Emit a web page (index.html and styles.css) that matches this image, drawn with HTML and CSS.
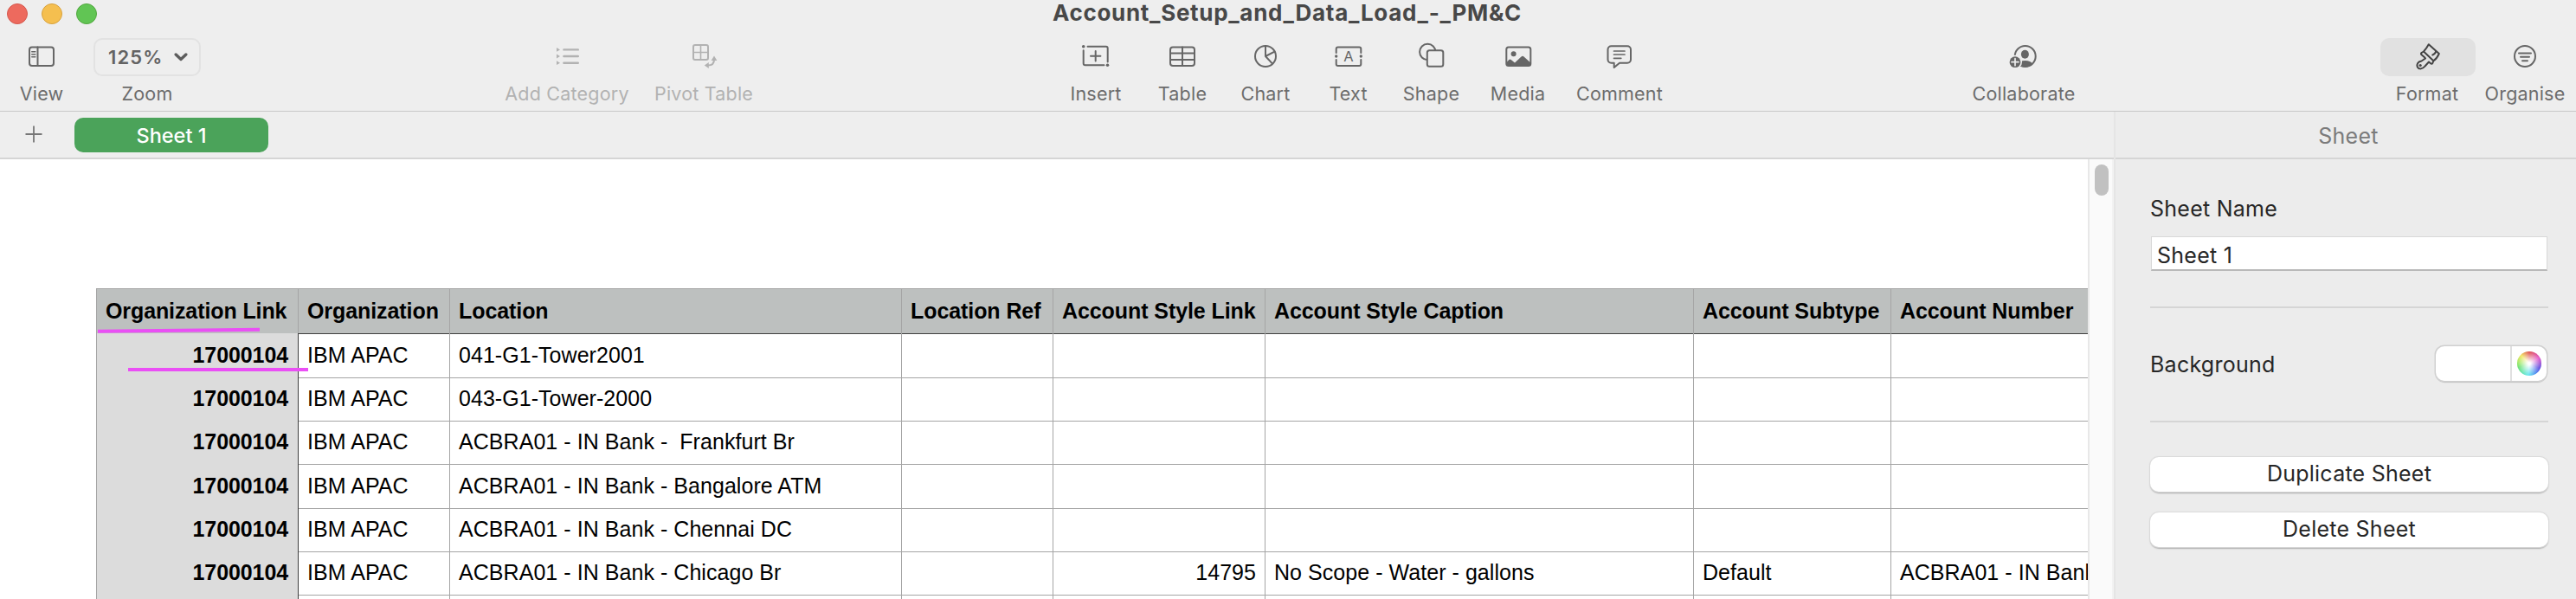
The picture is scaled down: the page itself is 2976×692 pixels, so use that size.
FILE: index.html
```html
<!DOCTYPE html>
<html lang="en">
<head>
<meta charset="utf-8">
<title>Account_Setup_and_Data_Load_-_PM&amp;C</title>
<link rel="stylesheet" href="styles.css">
</head>
<body>
<div class="window">
  <header class="titlebar">
    <div class="lights"><i class="close"></i><i class="min"></i><i class="max"></i></div>
    <h1 class="title">Account_Setup_and_Data_Load_-_PM&amp;C</h1>
    <nav class="toolbar">
      <div class="tool t-view">
        <svg class="icon" viewBox="-22 -22 44 44"><rect x="-14" y="-11.6" width="28" height="21.6" rx="3"/><path d="M-4.5-11.6V10"/><path class="thin" d="M-11.2-6.3h4M-11.2-3.3h4M-11.2-.3h4"/></svg>
        <span>View</span></div>
      <div class="tool t-zoom">
        <div class="zoom-menu"><b>125%</b><svg viewBox="0 0 16 10"><path d="M2.2 2 8 7.4 13.8 2"/></svg></div>
        <span>Zoom</span></div>
      <div class="tool t-category off">
        <svg class="icon" viewBox="-22 -22 44 44"><path stroke-width="2.4" d="M-3.6-8.6H12.8M-3.6-1H12.8M-3.6 6.7H12.8"/><path class="fill" d="M-12-11v4.8l4-2.4zM-12-3.4v4.8l4-2.4zM-12 4.3v4.8l4-2.4z"/></svg>
        <span>Add Category</span></div>
      <div class="tool t-pivot off">
        <svg class="icon" viewBox="-22 -22 44 44"><rect x="-12" y="-14" width="17" height="17" rx="2"/><path stroke-width="1.6" d="M-3.5-14V3M-12-5.5H5"/><path d="M5 9.5C9.5 9.5 12 7 12 3"/><path class="fill" d="M.8 9.5 5.8 6v7zM12-1.5 8.6 4h6.8z"/></svg>
        <span>Pivot Table</span></div>
      <div class="tool t-insert">
        <svg class="icon" viewBox="-22 -22 44 44"><path d="M-9.5-12.3H11.7a2 2 0 0 1 2 2V5.5M-14.3-7.8V7.3a2 2 0 0 0 2 2H9.5M-6-1.2H5.4M-.3-6.9V4.5"/><circle class="fill" cx="-14.3" cy="-12.2" r="1.8"/><circle class="fill" cx="13.5" cy="9.3" r="1.8"/></svg>
        <span>Insert</span></div>
      <div class="tool t-table">
        <svg class="icon" viewBox="-22 -22 44 44"><rect x="-14" y="-11.6" width="28" height="21.6" rx="3"/><path d="M0-11.6V10M-14-4.4H14M-14 3H14"/></svg>
        <span>Table</span></div>
      <div class="tool t-chart">
        <svg class="icon" viewBox="-22 -22 44 44"><circle cy="-1" r="12"/><path d="M0-13V-1L7.8 7.4M0-1 10.5-6.4"/></svg>
        <span>Chart</span></div>
      <div class="tool t-text">
        <svg class="icon" viewBox="-22 -22 44 44"><path d="M-14.3-5V-9.6a2 2 0 0 1 2-2H12.3a2 2 0 0 1 2 2V-5M-14.3 3V8a2 2 0 0 0 2 2H12.3a2 2 0 0 0 2-2V3"/><circle class="fill" cx="-14.3" cy="-1" r="1.7"/><circle class="fill" cx="14.3" cy="-1" r="1.7"/><text x="0" y="5">A</text></svg>
        <span>Text</span></div>
      <div class="tool t-shape">
        <svg class="icon" viewBox="-22 -22 44 44"><circle cx="-4.7" cy="-6" r="9.2"/><rect class="plate" x="-5.2" y="-7.7" width="18.5" height="18.5" rx="2.5"/></svg>
        <span>Shape</span></div>
      <div class="tool t-media">
        <svg class="icon" viewBox="-22 -22 44 44"><rect x="-13.7" y="-11.6" width="28" height="21.6" rx="2.5"/><circle class="fill" cx="-5.4" cy="-3.7" r="3"/><path class="fill" d="M-14 6.5-10.7 3q1.2-1 2.4 0L-4 6.5 3.5-.6q1.5-1.3 3 0L14.3 6.5V9.5H-14z"/></svg>
        <span>Media</span></div>
      <div class="tool t-comment">
        <svg class="icon" viewBox="-22 -22 44 44"><path d="M-9.5-12.7H9a4 4 0 0 1 4 4V2.7a4 4 0 0 1-4 4H0L-6.3 12V6.7H-9.5a4 4 0 0 1-4-4V-8.7a4 4 0 0 1 4-4z"/><path stroke-width="1.7" d="M-6.5-7H6M-6.5-3H6M-6.5 1.3H1.8"/></svg>
        <span>Comment</span></div>
      <div class="tool t-collab">
        <svg class="icon" viewBox="-22 -22 44 44"><circle cx="1.7" cy="-1" r="12"/><ellipse class="fill" cx="1.4" cy="-3.3" rx="4.5" ry="5"/><path class="fill" d="M-7 8Q-5 4 1.5 4T10 7.5Q7 11.5 1.7 11.5T-7 8z"/><circle class="knock" cx="-10" cy="5.7" r="8"/><circle class="fill" cx="-10" cy="5.7" r="6.4"/><path class="cut" d="M-14 5.7h8M-10 1.7v8"/></svg>
        <span>Collaborate</span></div>
      <div class="tool t-format">
        <div class="pressed"><svg class="icon" viewBox="-22 -22 44 44"><path d="M.8-14.8 12.8-4Q10.5 1.5 6.3 4.3L5.3 7Q4.3 8.5 3 7.3L1 5.5-3.5 10.5Q-6.5 14.5-10.8 13-13.8 10.5-11.8 7-10.5 5-7.5 4.5L-3 1.5-4.5-.3-7.7-3Q-8.5-4.2-7.3-5.2L-5-6.5Q-1.5-10.5 .8-14.8zM-5-6.5 6.3 4.3M5.3-2.5Q8.5-3.8 9.3-7"/><circle class="fill" cx="-8.8" cy="9.5" r="1.6"/></svg></div>
        <span>Format</span></div>
      <div class="tool t-organise">
        <svg class="icon" viewBox="-22 -22 44 44"><circle cy="-1" r="12"/><path d="M-7-4.6H7M-5-.2H5M-3 4.2H3"/></svg>
        <span>Organise</span></div>
    </nav>
  </header>

  <main class="body">
    <section class="document">
      <div class="tabs">
        <svg class="add" viewBox="0 0 20 20"><path d="M10 .5v19M.5 10h19"/></svg>
        <div class="tab"><span>Sheet 1</span></div>
      </div>
      <div class="canvas">
        <div class="sheet">
          <div class="grid">
            <div class="row head"><div>Organization Link</div><div>Organization</div><div>Location</div><div>Location Ref</div><div>Account Style Link</div><div>Account Style Caption</div><div>Account Subtype</div><div>Account Number</div></div>
            <div class="row"><div>17000104</div><div>IBM APAC</div><div>041-G1-Tower2001</div><div></div><div></div><div></div><div></div><div></div></div>
            <div class="row"><div>17000104</div><div>IBM APAC</div><div>043-G1-Tower-2000</div><div></div><div></div><div></div><div></div><div></div></div>
            <div class="row tall"><div>17000104</div><div>IBM APAC</div><div>ACBRA01 - IN Bank -&nbsp; Frankfurt Br</div><div></div><div></div><div></div><div></div><div></div></div>
            <div class="row"><div>17000104</div><div>IBM APAC</div><div>ACBRA01 - IN Bank - Bangalore ATM</div><div></div><div></div><div></div><div></div><div></div></div>
            <div class="row"><div>17000104</div><div>IBM APAC</div><div>ACBRA01 - IN Bank - Chennai DC</div><div></div><div></div><div></div><div></div><div></div></div>
            <div class="row"><div>17000104</div><div>IBM APAC</div><div>ACBRA01 - IN Bank - Chicago Br</div><div></div><div class="num">14795</div><div>No Scope - Water - gallons</div><div>Default</div><div>ACBRA01 - IN Bank</div></div>
            <div class="row"><div></div><div></div><div></div><div></div><div></div><div></div><div></div><div></div></div>
          </div>
          <svg class="marks" viewBox="0 0 300 60"><path d="M2 9.8 189 7.8M37 54H245"/></svg>
        </div>
        <div class="scroll"><i></i></div>
      </div>
    </section>

    <aside class="panel">
      <div class="panel-title"><span>Sheet</span></div>
      <div class="panel-body">
        <label class="name-label"><span>Sheet Name</span></label>
        <div class="field"><span>Sheet 1</span></div>
        <hr>
        <div class="bg-row"><span>Background</span>
          <div class="well"><i class="swatch"></i><i class="picker"><i class="wheel"></i></i></div>
        </div>
        <hr>
        <div class="button"><span>Duplicate Sheet</span></div>
        <div class="button"><span>Delete Sheet</span></div>
      </div>
    </aside>
  </main>
</div>
</body>
</html>
```
FILE: styles.css
```css
* { box-sizing: border-box; }
body { margin: 0; background: #fff; font-family: Inter, "Liberation Sans", sans-serif; }
.window { width: 2976px; height: 692px; overflow: hidden; display: flex; flex-direction: column; }

/* title bar and toolbar */
.titlebar { position: relative; height: 129px; background: #eee; border-bottom: 1px solid #c8c8c8; flex: none; }
.lights { position: absolute; left: 8px; top: 4px; display: flex; gap: 16px; }
.lights i { width: 24px; height: 24px; border-radius: 50%; border: 1px solid; }
.lights .close { background: #ed6a5e; border-color: #d5574c; }
.lights .min { background: #f5bf4f; border-color: #d8a13d; }
.lights .max { background: #61c554; border-color: #51a73e; }
.title { margin: 0; height: 44px; padding-right: 2px; text-align: center; font-size: 26px; line-height: 30px; font-weight: 700; color: #484848; letter-spacing: .7px; }
.toolbar { display: flex; align-items: flex-start; }
.tool { flex: none; display: flex; flex-direction: column; align-items: center; color: #6c6c6c; font-size: 21.5px; letter-spacing: .2px; line-height: 26px; white-space: nowrap; }
.tool > span { margin-top: 7px; }
.tool.off { color: #b2b2b2; }
.t-view { width: 60px; margin-left: 18px; }
.t-zoom { width: 124px; margin-left: 30px; }
.t-category { width: 150px; margin-left: 348px; }
.t-pivot { width: 130px; margin-left: 18px; }
.t-insert { width: 70px; margin-left: 353px; }
.t-table { width: 70px; margin-left: 30px; }
.t-chart { width: 70px; margin-left: 26px; }
.t-text { width: 60px; margin-left: 30.5px; }
.t-shape { width: 70px; margin-left: 31px; }
.t-media { width: 70px; margin-left: 30px; }
.t-comment { width: 110px; margin-left: 27.5px; }
.t-collab { width: 130px; margin-left: 347px; }
.t-format { width: 110px; margin-left: 347px; }
.t-format > span { margin-right: 2px; }
.t-organise { width: 100px; margin-left: 7px; }
.icon { width: 44px; height: 44px; display: block; fill: none; stroke: #666; stroke-width: 2; stroke-linecap: round; stroke-linejoin: round; }
.off .icon { stroke: #b2b2b2; }
.icon .thin { stroke-width: 1.6; }
.icon .fill { fill: #666; stroke: none; }
.off .icon .fill { fill: #b2b2b2; }
.icon .plate { fill: #eee; }
.icon .knock { fill: #eee; stroke: none; }
.icon .cut { stroke: #eee; stroke-width: 1.7; }
.icon text { fill: #666; stroke: none; font-size: 16.5px; text-anchor: middle; }
.zoom-menu { width: 124px; height: 44px; border: 2px solid #e2e2e2; border-radius: 10px; display: flex; align-items: center; padding-left: 15px; }
.zoom-menu b { width: 62px; font-size: 22px; font-weight: 600; letter-spacing: 1.1px; color: #636363; }
.zoom-menu svg { width: 16px; height: 10px; margin-left: 14px; fill: none; stroke: #5c5c5c; stroke-width: 3.4; stroke-linecap: round; stroke-linejoin: round; }
.pressed { width: 110px; height: 44px; border-radius: 10px; background: #e1e1e1; display: flex; justify-content: center; }
.pressed .icon { stroke: #444; }
.pressed .icon .fill { fill: #444; }

/* document */
.body { flex: 1; display: flex; min-height: 0; }
.document { width: 2442px; display: flex; flex-direction: column; }
.tabs { height: 55px; flex: none; background: #eee; border-bottom: 2px solid #d5d5d5; display: flex; align-items: flex-start; }
.add { width: 20px; height: 20px; margin: 16px 0 0 28.7px; fill: none; stroke: #777; stroke-width: 1.8; }
.tab { width: 224px; height: 40px; margin: 7px 0 0 37.3px; border-radius: 10px; background: #4ba35a; color: #fff; font-size: 23.5px; font-weight: 500; line-height: 42px; text-align: center; }
.canvas { flex: 1; display: flex; min-height: 0; background: #fff; }
.sheet { position: relative; width: 2412px; padding: 149px 0 0 111px; overflow: hidden; }
.grid { width: 2500px; border-left: 1px solid #a5a5a5; border-top: 1px solid #a5a5a5; font-family: "Liberation Sans", Arial, sans-serif; font-size: 25px; letter-spacing: .05px; color: #000; }
.row { display: grid; grid-template-columns: 233px 175px 522px 175px 245px 495px 228px 426px; height: 50px; }
.row.tall { height: 51px; }
.row > div { border-right: 1px solid #a5a5a5; border-bottom: 1px solid #a5a5a5; padding: 0 9px 0 10px; line-height: 51px; white-space: pre; }
.row > div:first-child { background: #dcdcdc; border-right-color: #3f3f3f; padding-right: 11px; font-weight: 700; text-align: right; letter-spacing: -.1px; }
.row.head { height: 51px; font-weight: 700; letter-spacing: -.08px; }
.row.head > div { background: #bdc0bf; border-right-color: #a5a5a5; border-bottom-color: #3f3f3f; text-align: left; padding-right: 8px; }
.row > .num { text-align: right; padding-right: 10px; }
.marks { position: absolute; left: 111px; top: 189px; width: 300px; height: 60px; fill: none; stroke: #ea4ff5; stroke-width: 4; }
.scroll { width: 30px; border-left: 2px solid #e8e8e8; border-right: 2px solid #f2f2f2; background: #fafafa; }
.scroll i { display: block; width: 16px; height: 36px; margin: 6px 0 0 6px; border-radius: 8px; background: #c1c1c1; }

/* inspector */
.panel { width: 534px; border-left: 2px solid #e5e5e5; background: #ececec; color: #262626; font-size: 25px; letter-spacing: .25px; }
.panel-title { height: 55px; border-bottom: 2px solid #d5d5d5; text-align: center; line-height: 56px; color: #7b7b7b; padding-left: 6px; }
.panel-body { padding: 42px 32px 0 40px; display: flex; flex-direction: column; }
.name-label { height: 30px; line-height: 30px; }
.field { height: 40px; margin: 17px 1px 0; background: #fff; border: 1px solid #d8d8d8; border-bottom: 2px solid #b9b9b9; padding-left: 6px; line-height: 43px; }
hr { width: 100%; height: 2px; border: 0; background: #d5d5d5; margin: 41px 0 0; }
.bg-row { display: flex; justify-content: space-between; height: 42px; margin-top: 42px; line-height: 46px; }
.well { width: 128px; height: 40px; margin: 2px 2px 0 0; background: #fff; border-radius: 10px; display: flex; box-shadow: 0 0 0 1.5px #d0d0d0, 0 2px 1px #b5b5b5; }
.swatch { width: 86px; }
.picker { border-left: 2px solid #e0e0e0; padding: 6px 0 0 6px; }
.wheel { display: block; width: 28px; height: 28px; border-radius: 50%; background: radial-gradient(closest-side, #fff 10%, rgba(255,255,255,0) 100%), conic-gradient(#dd4b4b, #e050c8 60deg, #5546e0 115deg, #4a8af0 145deg, #62e8ee 185deg, #66e070 250deg, #9be85e 275deg, #f2e45c 315deg, #dd4b4b); }
.bg-row + hr { margin-top: 46px; }
.button { height: 40px; margin-top: 24px; border-radius: 10px; background: #fff; box-shadow: 0 0 1px 1px #dadada, 0 1.5px 1.5px #a8a8a8; text-align: center; line-height: 39px; }
hr + .button { margin-top: 40px; }
```
